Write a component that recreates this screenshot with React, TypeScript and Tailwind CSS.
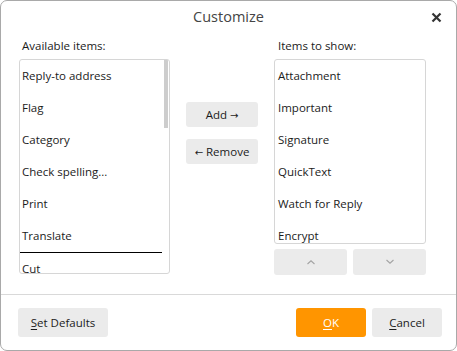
import React from 'react'

const available = [
  'Reply-to address',
  'Flag',
  'Category',
  'Check spelling...',
  'Print',
  'Translate',
]

const shown = [
  'Attachment',
  'Important',
  'Signature',
  'QuickText',
  'Watch for Reply',
  'Encrypt',
]

function Chevron({ up }: { up?: boolean }) {
  return (
    <svg width="10" height="6" viewBox="0 0 10 6" fill="none">
      <polyline
        points={up ? '1.5,5 5,1.8 8.5,5' : '1.5,1 5,4.2 8.5,1'}
        stroke="#a3a3a3"
        strokeWidth="1.1"
      />
    </svg>
  )
}

export default function App() {
  return (
    <div
      className="flex h-[351px] w-[457px] flex-col overflow-hidden rounded-[7px] border border-[#a9a9a9] bg-white text-[11.5px] text-[#1b1b1b]"
      style={{ fontFamily: '"Open Sans", "Noto Sans", sans-serif' }}
    >
      <div className="relative flex h-[31px] shrink-0 items-center justify-center">
        <span className="text-[14.5px] text-[#444]">Customize</span>
        <button className="absolute right-[14px] top-[10px] flex h-[12px] w-[12px] items-center justify-center">
          <svg width="11" height="11" viewBox="0 0 11 11">
            <path d="M1.5 1.5 L9.5 9.5 M9.5 1.5 L1.5 9.5" stroke="#333" strokeWidth="2.2" />
          </svg>
        </button>
      </div>

      <div className="flex flex-1 pl-[18px] pt-[6px]">
        <div className="flex w-[151px] flex-col">
          <div className="mb-[5px] ml-[3px] h-[16px] leading-[16px]">Available items:</div>
          <div className="relative h-[215px] overflow-hidden rounded-[3px] border border-[#d6d6d6]">
            {available.map((item) => (
              <div key={item} className="flex h-[32px] items-center pl-[2px]">
                {item}
              </div>
            ))}
            <div className="h-[1px] w-[142px] bg-black" />
            <div className="flex h-[32px] items-center pl-[2px]">Cut</div>
            <div className="absolute right-[1px] top-0 h-[68px] w-[4px] bg-[#cdcdcd]" />
          </div>
        </div>

        <div className="ml-[16px] flex w-[72px] flex-col gap-[12px] pt-[64px]">
          <button className="h-[25px] rounded-[3px] bg-[#ebebeb]">
            Add <span style={{ fontFamily: '"DejaVu Sans", sans-serif' }} className="text-[10px]">→</span>
          </button>
          <button className="h-[25px] rounded-[3px] bg-[#ebebeb]">
            <span style={{ fontFamily: '"DejaVu Sans", sans-serif' }} className="text-[10px]">←</span> Remove
          </button>
        </div>

        <div className="ml-[16px] flex w-[152px] flex-col">
          <div className="mb-[5px] ml-[4px] h-[16px] leading-[16px]">Items to show:</div>
          <div className="h-[185px] overflow-hidden rounded-[3px] border border-[#d6d6d6]">
            {shown.map((item) => (
              <div key={item} className="flex h-[32px] items-center pl-[3px]">
                {item}
              </div>
            ))}
          </div>
          <div className="mt-[5px] flex gap-[6px]">
            <button className="flex h-[26px] w-[73px] items-center justify-center rounded-[3px] bg-[#ebebeb]">
              <Chevron up />
            </button>
            <button className="flex h-[26px] w-[73px] items-center justify-center rounded-[3px] bg-[#ebebeb]">
              <Chevron />
            </button>
          </div>
        </div>
      </div>

      <div className="flex h-[56px] shrink-0 items-center border-t border-[#d9d9d9] pl-[17px] pr-[14px]">
        <button className="h-[29px] w-[90px] rounded-[3px] bg-[#ebebeb]">
          <span className="underline underline-offset-[1.5px]">S</span>et Defaults
        </button>
        <div className="ml-auto flex gap-[6px]">
          <button className="h-[29px] w-[70px] rounded-[3px] bg-[#ff9500] text-white">
            <span className="underline underline-offset-[1.5px]">O</span>K
          </button>
          <button className="h-[29px] w-[70px] rounded-[3px] bg-[#ebebeb]">
            <span className="underline underline-offset-[1.5px]">C</span>ancel
          </button>
        </div>
      </div>
    </div>
  )
}
